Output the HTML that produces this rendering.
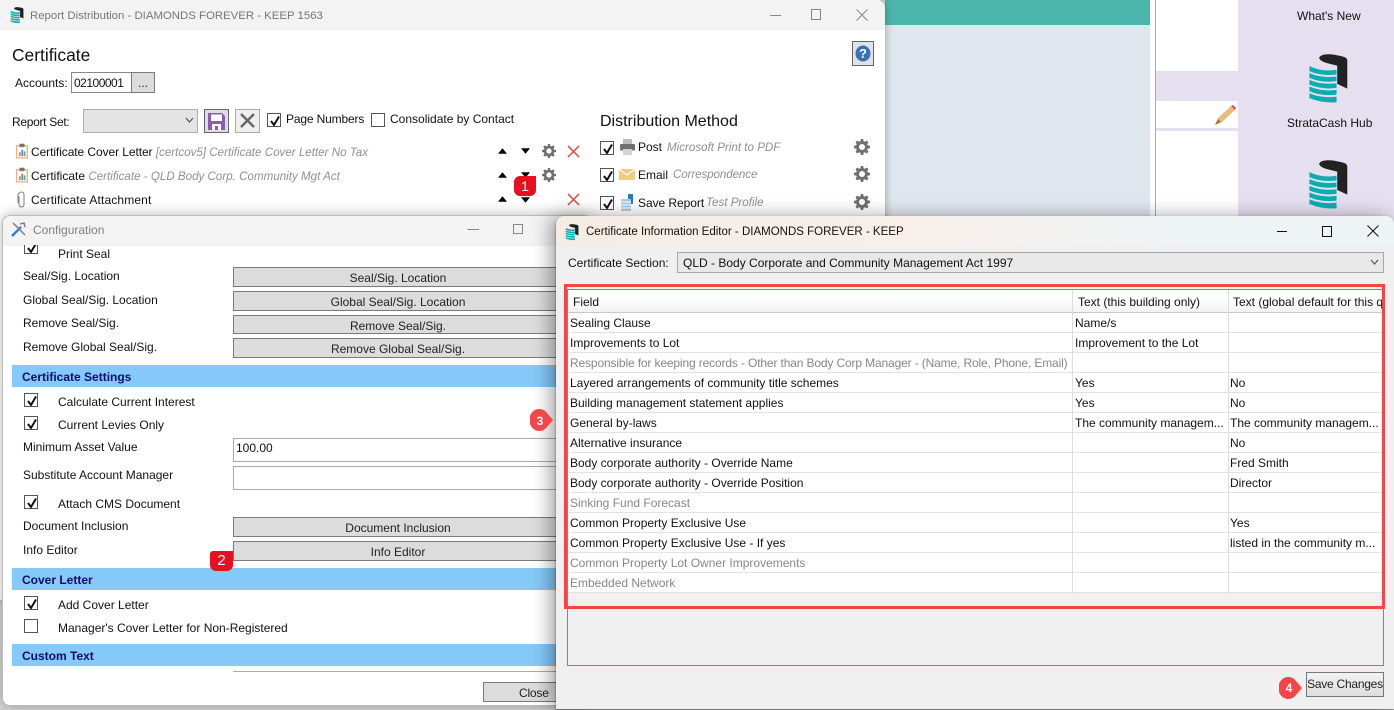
<!DOCTYPE html>
<html><head><meta charset="utf-8"><title>Certificate Information Editor</title>
<style>
html,body{margin:0;padding:0}
body{width:1394px;height:710px;position:relative;overflow:hidden;background:#d4d4d4;font:12px/16px "Liberation Sans",sans-serif;color:#111}
div,svg{position:absolute;box-sizing:border-box}
.t{white-space:nowrap;height:16px}
.g{color:#8f8f8f;font-style:italic;font-size:11.6px}
.tg{color:#808080}
.btn{background:#dcdcdc;border:1px solid #7a7a7a;text-align:center;line-height:20px;color:#222;white-space:nowrap}
.inp{background:#fff;border:1px solid #a8a8a8}
.cb{width:14px;height:14px;border:1px solid #555;background:#fff}
.cb svg{left:1px;top:1px}
.sec{left:12px;width:544px;height:22px;background:#85c9f9;color:#0b0b70;font-weight:bold;line-height:24px;padding-left:10px}
.row{left:1px;width:815px;height:20px;border-bottom:1px solid #e2e2e2;line-height:21px}
.row div{top:0;white-space:nowrap;overflow:hidden;height:19px}
.c1{left:1px;width:502px}
.c2{left:506px;width:150px}
.c3{left:661px;width:153px}
.dim{color:#868686}
.bd{color:#fff;text-align:center;font-size:15px;line-height:20px}
.bs{color:#fff;text-align:center;font-weight:bold;font-size:12px}
</style></head><body>
<svg width="0" height="0" style="left:0;top:0">
<defs>
<symbol id="logo" viewBox="470 155 125 155">
<path d="M506 172C512 160 540 160 560 165C580 168 590 172 590 180V264L560 250V196C545 190 510 188 506 172Z" fill="#222"/>
<path d="M477 197Q515 215 558 208V222Q515 228 477 212Z" fill="#0aaeb0"/>
<path d="M477 218Q515 234 558 228V242Q515 248 477 232Z" fill="#0aaeb0"/>
<path d="M477 238Q515 254 558 248V262Q515 268 477 252Z" fill="#0aaeb0"/>
<path d="M477 258Q515 274 558 268V282Q515 288 477 272Z" fill="#0aaeb0"/>
<path d="M477 278Q515 294 558 288V305Q515 308 477 292Z" fill="#0aaeb0"/>
</symbol>
<symbol id="gear" viewBox="0 0 16 16">
<path fill="#707070" fill-rule="evenodd" d="M6.8 0h2.4l.4 2.2 1.3.55L12.8 1.5l1.7 1.7-1.25 1.9.55 1.3L16 6.8v2.4l-2.2.4-.55 1.3 1.25 1.9-1.7 1.7-1.9-1.25-1.3.55L9.2 16H6.8l-.4-2.2-1.3-.55-1.9 1.25-1.7-1.7 1.25-1.9-.55-1.3L0 9.2V6.8l2.2-.4.55-1.3L1.5 3.2l1.7-1.7 1.9 1.25 1.3-.55zM8 5a3 3 0 1 0 0 6 3 3 0 0 0 0-6z"/>
</symbol>
<symbol id="x" viewBox="0 0 14 14"><path d="M1 1L13 13M13 1L1 13" stroke="#d9573a" stroke-width="1.6" fill="none"/></symbol>
<symbol id="up" viewBox="0 0 10 6"><path d="M5 0L10 6H0Z" fill="#000"/></symbol>
<symbol id="dn" viewBox="0 0 10 6"><path d="M0 0H10L5 6Z" fill="#000"/></symbol>
<symbol id="chk" viewBox="0 0 12 12"><path d="M2 6L5 10L10 1.5" stroke="#111" stroke-width="2" fill="none"/></symbol>
<symbol id="rep" viewBox="0 0 14 17"><rect x=".8" y="2.5" width="12.4" height="14" fill="#fff" stroke="#f0b070" stroke-width="1.5"/><rect x="4" y="0" width="6" height="4" fill="#777"/><rect x="3.5" y="10" width="2" height="4.5" fill="#e08040"/><rect x="6.3" y="7" width="2" height="7.5" fill="#4a90d0"/><rect x="9" y="9" width="2" height="5.5" fill="#70a850"/></symbol>
</defs></svg>

<!-- background app -->
<div style="left:885px;top:0;width:269px;height:220px;background:#e0e6ee"></div>
<div style="left:885px;top:0;width:265px;height:25px;background:#4db6ac"></div>
<div style="left:1150px;top:0;width:5px;height:220px;background:#fff"></div>
<div style="left:1155px;top:0;width:1px;height:220px;background:#aaa"></div>
<div style="left:1156px;top:0;width:82px;height:220px;background:#fff"></div>
<div style="left:1156px;top:71px;width:82px;height:30px;background:#e6dff0"></div>
<div style="left:1156px;top:128px;width:82px;height:3px;background:#e6dff0"></div>
<svg style="left:1214px;top:104px" width="24" height="22" viewBox="0 0 24 22"><path d="M1 21L4 14L17 2L21 6L8 18Z" fill="#e8bd7c"/><path d="M1 21L4 15L7 18Z" fill="#a87838"/><path d="M17 2L19 1L22 4L21 6Z" fill="#f04050"/></svg>
<div style="left:1238px;top:0;width:156px;height:220px;background:#e6dff0"></div>
<div class="t" style="left:1297px;top:8px">What's New</div>
<svg style="left:1307px;top:52px" width="42" height="52"><use href="#logo"/></svg>
<div class="t" style="left:1287px;top:115px">StrataCash Hub</div>
<svg style="left:1307px;top:158px" width="42" height="52"><use href="#logo"/></svg>

<!-- Report distribution window -->
<div style="left:0;top:0;width:885px;height:600px;background:#fff;border-radius:0 8px 0 0;box-shadow:0 0 8px rgba(0,0,0,.35)">
<div style="left:0;top:0;width:885px;height:30px;background:#f3f3f3;border-radius:0 8px 0 0"></div>
</div>
<svg style="left:10px;top:6px" width="14" height="18"><use href="#logo"/></svg>
<div class="t" style="left:30px;top:8px;color:#777;font-size:11.4px">Report Distribution - DIAMONDS FOREVER - KEEP 1563</div>
<div style="left:770px;top:15px;width:11px;height:1px;background:#888"></div>
<div style="left:811px;top:9px;width:10px;height:11px;border:1px solid #888"></div>
<svg style="left:856px;top:9px" width="12" height="12"><path d="M.5 .5L11.5 11.5M11.5 .5L.5 11.5" stroke="#888"/></svg>
<div class="t" style="left:12px;top:44px;font-size:17.4px;line-height:22px;height:22px">Certificate</div>
<div class="t" style="left:15px;top:75px">Accounts:</div>
<div class="inp t" style="left:71px;top:72px;width:61px;height:21px;padding-left:2px;line-height:21px;color:#111;border-color:#888;letter-spacing:-.5px">02100001</div>
<div class="btn" style="left:131px;top:72px;width:24px;height:21px;line-height:20px">...</div>
<div class="t" style="left:12px;top:114px;letter-spacing:-.3px">Report Set:</div>
<div style="left:83px;top:109px;width:115px;height:24px;background:#e4e4e4;border:1px solid #adadad"></div>
<svg style="left:185px;top:117px" width="9" height="7"><path d="M1 1L4.5 5L8 1" stroke="#555" fill="none" stroke-width="1.2"/></svg>
<div style="left:204px;top:109px;width:25px;height:24px;background:#ddd;border:1px solid #666"></div>
<svg style="left:208px;top:113px" width="17" height="17" viewBox="0 0 17 17"><path d="M0 0H14L17 3V17H0Z" fill="#8a5cb8"/><rect x="3" y="1.5" width="11" height="6.5" fill="#fff"/><rect x="4" y="11" width="9" height="6" fill="#fff"/><rect x="7" y="13" width="3" height="4" fill="#8a5cb8"/></svg>
<div style="left:235px;top:109px;width:25px;height:24px;background:#eee;border:1px solid #aaa"></div>
<svg style="left:240px;top:113px" width="15" height="15"><path d="M1 1L14 14M14 1L1 14" stroke="#666" stroke-width="2.4"/></svg>
<div class="cb" style="left:267px;top:113px"><svg width="12" height="12"><use href="#chk"/></svg></div>
<div class="t" style="left:286px;top:111px;letter-spacing:-.15px">Page Numbers</div>
<div class="cb" style="left:371px;top:113px"></div>
<div class="t" style="left:390px;top:111px">Consolidate by Contact</div>

<svg style="left:16px;top:143px" width="12" height="16"><use href="#rep"/></svg>
<div class="t" style="left:31px;top:144px"><span style="letter-spacing:-.08px">Certificate Cover Letter</span> <span class="g">[certcov5] Certificate Cover Letter No Tax</span></div>
<svg style="left:16px;top:167px" width="12" height="16"><use href="#rep"/></svg>
<div class="t" style="left:31px;top:168px">Certificate <span class="g">Certificate - QLD Body Corp. Community Mgt Act</span></div>
<svg style="left:16px;top:191px" width="11" height="17" viewBox="0 0 11 17"><path d="M3 5V13Q3 16 5.5 16T8 13V4Q8 1 5.5 1T2 4V12" stroke="#888" fill="none" stroke-width="1.1"/></svg>
<div class="t" style="left:31px;top:192px;letter-spacing:.14px">Certificate Attachment</div>
<svg style="left:498px;top:148px" width="9" height="6"><use href="#up"/></svg>
<svg style="left:521px;top:148px" width="9" height="6"><use href="#dn"/></svg>
<svg style="left:542px;top:144px" width="14" height="14"><use href="#gear"/></svg>
<svg style="left:567px;top:145px" width="13" height="13"><use href="#x"/></svg>
<svg style="left:498px;top:172px" width="9" height="6"><use href="#up"/></svg>
<svg style="left:521px;top:172px" width="9" height="6"><use href="#dn"/></svg>
<svg style="left:542px;top:168px" width="14" height="14"><use href="#gear"/></svg>
<svg style="left:498px;top:196px" width="9" height="6"><use href="#up"/></svg>
<svg style="left:521px;top:197px" width="9" height="6"><use href="#dn"/></svg>
<svg style="left:567px;top:193px" width="13" height="13"><use href="#x"/></svg>

<div style="left:852px;top:41px;width:22px;height:25px;background:#dfe3e8;border:1px solid #666"></div>
<svg style="left:855px;top:45px" width="16" height="17"><ellipse cx="8" cy="8.5" rx="7.5" ry="8" fill="#3a70b8"/><text x="8" y="13" font-family="Liberation Sans" font-size="13" font-weight="bold" fill="#fff" text-anchor="middle">?</text></svg>
<div class="t" style="left:600px;top:112px;font-size:16px;line-height:20px;height:20px">Distribution Method</div>
<div class="cb" style="left:600px;top:141px"><svg width="12" height="12"><use href="#chk"/></svg></div>
<svg style="left:620px;top:139px" width="15" height="16" viewBox="0 0 15 16"><rect x="3" y="0" width="9" height="5" fill="#bbb"/><rect x="0" y="5" width="15" height="6.5" rx="1" fill="#707070"/><rect x="3" y="10" width="9" height="6" fill="#d4d4d4"/></svg>
<div class="t" style="left:638px;top:139px">Post</div>
<div class="t g" style="left:667px;top:140px">Microsoft Print to PDF</div>
<svg style="left:854px;top:139px" width="16" height="16"><use href="#gear"/></svg>
<div class="cb" style="left:600px;top:168px"><svg width="12" height="12"><use href="#chk"/></svg></div>
<svg style="left:619px;top:169px" width="16" height="11" viewBox="0 0 16 11"><rect width="16" height="11" fill="#f0ca80"/><path d="M0 0L8 6L16 0" stroke="#fff" fill="none" stroke-width="1.2"/></svg>
<div class="t" style="left:638px;top:167px">Email</div>
<div class="t g" style="left:673px;top:167px;letter-spacing:-.1px">Correspondence</div>
<svg style="left:854px;top:166px" width="16" height="16"><use href="#gear"/></svg>
<div class="cb" style="left:600px;top:196px"><svg width="12" height="12"><use href="#chk"/></svg></div>
<svg style="left:620px;top:194px" width="15" height="17" viewBox="0 0 15 17"><path d="M8 0H13V10H8Z" fill="#2b78c8"/><path d="M1 5H11V17H1Z" fill="#a8cbe8"/><path d="M1 8H11M1 11H11M1 14H11" stroke="#fff"/></svg>
<div class="t" style="left:638px;top:195px;letter-spacing:-.05px">Save Report</div>
<div class="t g" style="left:706px;top:195px">Test Profile</div>
<svg style="left:854px;top:194px" width="16" height="16"><use href="#gear"/></svg>

<!-- Configuration window -->
<div style="left:2px;top:215px;width:590px;height:491px;background:#fff;border:1px solid #bbb;border-radius:8px;box-shadow:0 0 14px rgba(0,0,0,.28)">
<div style="left:0;top:0;width:588px;height:30px;background:#f3f3f3;border-radius:8px 8px 0 0"></div>
</div>
<svg style="left:11px;top:222px" width="15" height="15" viewBox="0 0 15 15"><path d="M1 14L10 5" stroke="#2b80d0" stroke-width="2.4"/><path d="M2 1L14 13" stroke="#888" stroke-width="1.6"/><path d="M9 2L13 1L14 5" stroke="#777" fill="none" stroke-width="1.4"/></svg>
<div class="t" style="left:33px;top:222px;color:#808080">Configuration</div>
<div style="left:468px;top:229px;width:11px;height:1px;background:#888"></div>
<div style="left:513px;top:224px;width:10px;height:10px;border:1px solid #888"></div>

<div style="left:24px;top:245px;width:14px;height:14px;overflow:hidden"><div class="cb" style="left:0;top:-5px"><svg width="12" height="12"><use href="#chk"/></svg></div></div>
<div class="t" style="left:58px;top:246px">Print Seal</div>
<div class="t" style="left:23px;top:268px">Seal/Sig. Location</div>
<div class="btn" style="left:233px;top:267px;width:330px;height:20px">Seal/Sig. Location</div>
<div class="t" style="left:23px;top:292px">Global Seal/Sig. Location</div>
<div class="btn" style="left:233px;top:291px;width:330px;height:20px">Global Seal/Sig. Location</div>
<div class="t" style="left:23px;top:315px">Remove Seal/Sig.</div>
<div class="btn" style="left:233px;top:315px;width:330px;height:19px">Remove Seal/Sig.</div>
<div class="t" style="left:23px;top:339px">Remove Global Seal/Sig.</div>
<div class="btn" style="left:233px;top:338px;width:330px;height:20px">Remove Global Seal/Sig.</div>
<div class="sec" style="top:365px">Certificate Settings</div>
<div class="cb" style="left:24px;top:393px"><svg width="12" height="12"><use href="#chk"/></svg></div>
<div class="t" style="left:58px;top:394px">Calculate Current Interest</div>
<div class="cb" style="left:24px;top:416px"><svg width="12" height="12"><use href="#chk"/></svg></div>
<div class="t" style="left:58px;top:417px">Current Levies Only</div>
<div class="t" style="left:23px;top:439px">Minimum Asset Value</div>
<div class="inp t" style="left:233px;top:438px;width:330px;height:24px;line-height:19px;padding-left:2px">100.00</div>
<div class="t" style="left:23px;top:467px">Substitute Account Manager</div>
<div class="inp" style="left:233px;top:466px;width:330px;height:24px"></div>
<div class="cb" style="left:24px;top:495px"><svg width="12" height="12"><use href="#chk"/></svg></div>
<div class="t" style="left:58px;top:496px">Attach CMS Document</div>
<div class="t" style="left:23px;top:518px">Document Inclusion</div>
<div class="btn" style="left:233px;top:517px;width:330px;height:20px">Document Inclusion</div>
<div class="t" style="left:23px;top:542px">Info Editor</div>
<div class="btn" style="left:233px;top:541px;width:330px;height:20px">Info Editor</div>
<div class="sec" style="top:568px">Cover Letter</div>
<div class="cb" style="left:24px;top:596px"><svg width="12" height="12"><use href="#chk"/></svg></div>
<div class="t" style="left:58px;top:597px">Add Cover Letter</div>
<div class="cb" style="left:24px;top:619px"></div>
<div class="t" style="left:58px;top:620px">Manager's Cover Letter for Non-Registered</div>
<div class="sec" style="top:644px">Custom Text</div>
<div style="left:233px;top:671px;width:330px;height:1px;background:#aaa"></div>
<div class="btn" style="left:483px;top:682px;width:100px;height:20px;text-align:left;padding-left:35px;letter-spacing:-.2px">Close</div>

<div class="bd" style="left:210px;top:551px;width:23px;height:20px;background:#e8101e;border-radius:3px 0 6px 6px">2</div>
<div class="bd" style="left:514px;top:176px;width:22px;height:20px;background:#e8101e;border-radius:6px 0 6px 6px;font-size:14px">1</div>

<!-- Editor window -->
<div style="left:556px;top:216px;width:838px;height:493px;background:#f0f0f0;border-radius:8px 8px 0 0;box-shadow:-6px 0 18px rgba(0,0,0,.35),0 1px 2px rgba(0,0,0,.5)">
<div style="left:0;top:0;width:838px;height:30px;background:linear-gradient(90deg,#f5ece4 0%,#f8efe9 40%,#eef3f6 75%,#eef3f6 100%);border-radius:8px 8px 0 0"></div>
</div>
<svg style="left:565px;top:223px" width="14" height="18"><use href="#logo"/></svg>
<div class="t" style="left:586px;top:224px;font-size:11.5px">Certificate Information Editor - DIAMONDS FOREVER - KEEP</div>
<div style="left:1277px;top:231px;width:10px;height:1px;background:#111"></div>
<div style="left:1322px;top:226px;width:10px;height:11px;border:1px solid #111"></div>
<svg style="left:1367px;top:225px" width="12" height="12"><path d="M.5 .5L11.5 11.5M11.5 .5L.5 11.5" stroke="#111"/></svg>
<div class="t" style="left:568px;top:255px">Certificate Section:</div>
<div class="t" style="left:677px;top:252px;width:707px;height:21px;background:#e8e8e8;border:1px solid #a8a8a8;padding-left:5px;line-height:21px">QLD - Body Corporate and Community Management Act 1997</div>
<svg style="left:1370px;top:259px" width="9" height="7"><path d="M1 1L4.5 5L8 1" stroke="#555" fill="none" stroke-width="1.2"/></svg>

<!-- grid -->
<div style="left:567px;top:289px;width:817px;height:377px;background:#f0f0f0;border:1px solid #6d8aa8;overflow:hidden">
<div style="left:0;top:0;width:815px;height:23px;background:linear-gradient(#fff 35%,#f0f2f3);border-bottom:1px solid #c8c8c8">
<div class="t" style="left:5px;top:4px">Field</div>
<div class="t" style="left:510px;top:4px">Text (this building only)</div>
<div class="t" style="left:665px;top:4px;width:150px;overflow:hidden">Text (global default for this q</div>
</div>
<div style="left:0;top:23px;width:815px;height:280px;background:#fff">
<div class="row" style="top:0"><div class="c1">Sealing Clause</div><div class="c2">Name/s</div></div>
<div class="row" style="top:20px"><div class="c1">Improvements to Lot</div><div class="c2">Improvement to the Lot</div></div>
<div class="row dim" style="top:40px"><div class="c1" style="letter-spacing:-.14px">Responsible for keeping records - Other than Body Corp Manager - (Name, Role, Phone, Email)</div></div>
<div class="row" style="top:60px"><div class="c1">Layered arrangements of community title schemes</div><div class="c2">Yes</div><div class="c3">No</div></div>
<div class="row" style="top:80px"><div class="c1">Building management statement applies</div><div class="c2">Yes</div><div class="c3">No</div></div>
<div class="row" style="top:100px"><div class="c1">General by-laws</div><div class="c2">The community managem...</div><div class="c3">The community managem...</div></div>
<div class="row" style="top:120px"><div class="c1">Alternative insurance</div><div class="c3">No</div></div>
<div class="row" style="top:140px"><div class="c1">Body corporate authority - Override Name</div><div class="c3">Fred Smith</div></div>
<div class="row" style="top:160px"><div class="c1">Body corporate authority - Override Position</div><div class="c3">Director</div></div>
<div class="row dim" style="top:180px"><div class="c1">Sinking Fund Forecast</div></div>
<div class="row" style="top:200px"><div class="c1">Common Property Exclusive Use</div><div class="c3">Yes</div></div>
<div class="row" style="top:220px"><div class="c1">Common Property Exclusive Use - If yes</div><div class="c3">listed in the community m...</div></div>
<div class="row dim" style="top:240px"><div class="c1">Common Property Lot Owner Improvements</div></div>
<div class="row dim" style="top:260px"><div class="c1">Embedded Network</div></div>
</div>
<div style="left:504px;top:0;width:1px;height:303px;background:#ddd"></div>
<div style="left:660px;top:0;width:1px;height:303px;background:#ddd"></div>
</div>
<div style="left:564px;top:284px;width:821px;height:325px;border:3px solid #f44548"></div>

<div class="btn" style="left:1306px;top:672px;width:78px;height:25px;line-height:23px;background:linear-gradient(#f2f2f2,#dedede);border-color:#777;letter-spacing:-.25px">Save Changes</div>
<svg style="left:530px;top:409px" width="24" height="23" viewBox="0 0 24 23"><path d="M10 0A10 11 0 0 1 17 4L23 11L17 18A10 11 0 1 1 10 0Z" fill="#f44548"/></svg>
<div class="bs t" style="left:530px;top:413px;width:20px">3</div>
<svg style="left:1279px;top:677px" width="24" height="23" viewBox="0 0 24 23"><path d="M10 0A10 11 0 0 1 17 4L23 11L17 18A10 11 0 1 1 10 0Z" fill="#f44548"/></svg>
<div class="bs t" style="left:1279px;top:680px;width:20px">4</div>
</body></html>
